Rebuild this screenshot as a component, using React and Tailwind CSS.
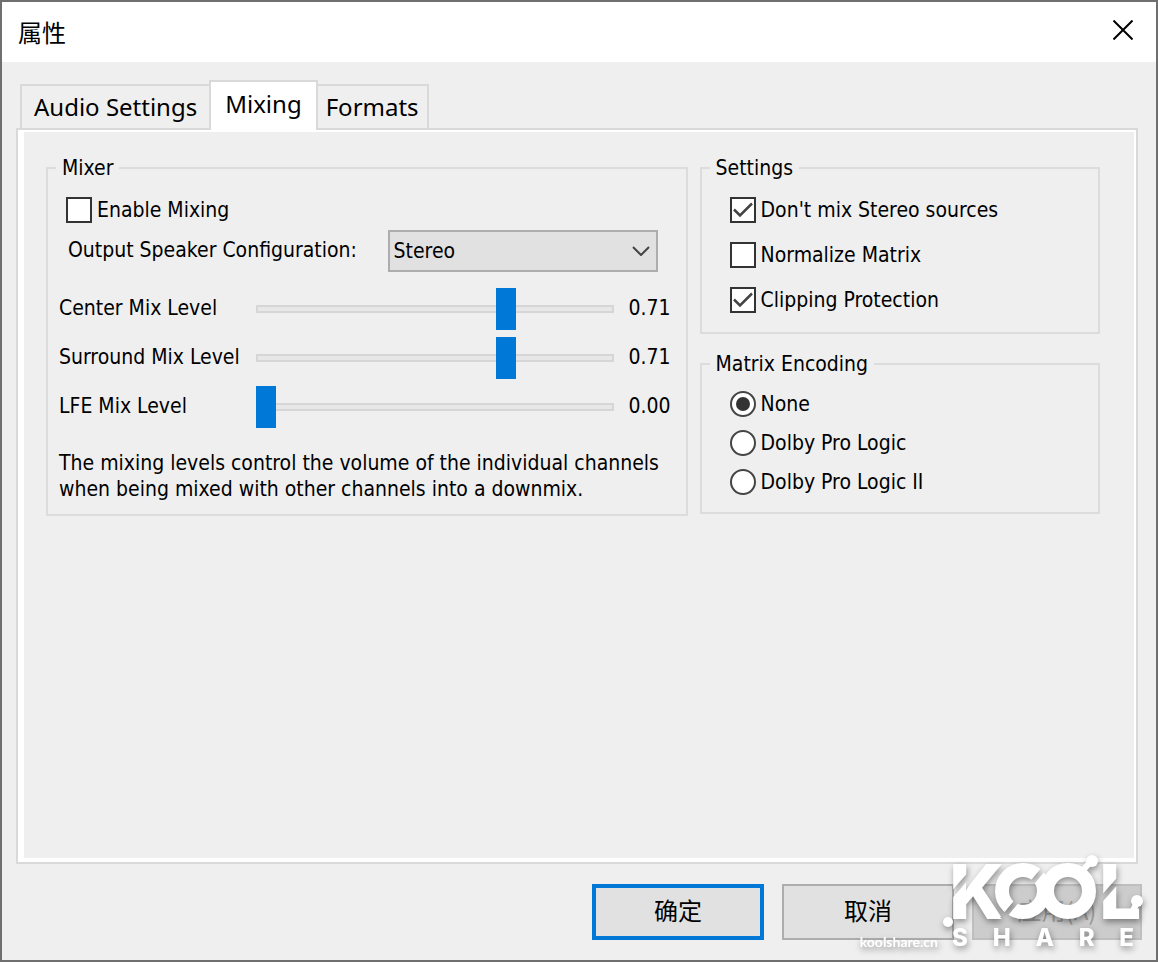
import { useState } from 'react'

const levels = [
  { id: 'center', label: 'Center Mix Level', value: 71 },
  { id: 'surround', label: 'Surround Mix Level', value: 71 },
  { id: 'lfe', label: 'LFE Mix Level', value: 0 },
]

const GroupBox = ({ title, className, children }) => (
  <fieldset className={`min-w-0 border-2 border-[#dcdcdc] ${className}`}>
    <legend className="ml-2 px-1.5 leading-6">{title}</legend>
    {children}
  </fieldset>
)

const CheckBox = ({ label, defaultChecked }) => (
  <label className="flex items-center gap-[5px] leading-7">
    <span className="relative flex size-[26px] shrink-0">
      <input
        type="checkbox"
        defaultChecked={defaultChecked}
        className="peer size-[26px] appearance-none border-2 border-[#333] bg-white"
      />
      <svg
        viewBox="0 0 26 26"
        className="pointer-events-none absolute inset-0 hidden fill-none stroke-[#444] stroke-[2.5] peer-checked:block"
      >
        <path d="M4 12.500l6 6L22 6.500" />
      </svg>
    </span>
    {label}
  </label>
)

const RadioButton = ({ label, defaultChecked }) => (
  <label className="flex items-center gap-[5px] leading-7">
    <span className="relative flex size-[26px] shrink-0">
      <input
        type="radio"
        name="encoding"
        defaultChecked={defaultChecked}
        className="peer size-[26px] appearance-none rounded-full border-2 border-[#444] bg-white"
      />
      <span className="pointer-events-none absolute inset-1.5 hidden rounded-full bg-[#333] peer-checked:block" />
    </span>
    {label}
  </label>
)

const LevelSlider = ({ id, label, initial }) => {
  const [level, setLevel] = useState(initial)

  return (
    <div className="flex h-[42px] items-center">
      <label htmlFor={id} className="w-[197px] shrink-0">{label}</label>
      <input
        id={id}
        type="range"
        min="0"
        max="100"
        value={level}
        onChange={(e) => setLevel(Number(e.target.value))}
        className="h-[42px] min-w-0 flex-1 appearance-none bg-transparent [&::-webkit-slider-runnable-track]:h-2 [&::-webkit-slider-runnable-track]:bg-[#e7e7e7] [&::-webkit-slider-runnable-track]:shadow-[inset_0_0_0_2px_#d6d6d6] [&::-webkit-slider-thumb]:-mt-[17px] [&::-webkit-slider-thumb]:h-[42px] [&::-webkit-slider-thumb]:w-5 [&::-webkit-slider-thumb]:appearance-none [&::-webkit-slider-thumb]:bg-[#0078d7]"
      />
      <output htmlFor={id} className="w-[70px] shrink-0 pl-[15px]">{(level / 100).toFixed(2)}</output>
    </div>
  )
}

const Watermark = () => (
  <div className="pointer-events-none absolute right-3 bottom-3 flex items-end gap-1 text-white drop-shadow-[1px_3px_3px_rgba(0,0,0,0.4)]">
    <span className="-mb-1 font-['Lato',sans-serif] text-sm leading-5 font-bold">koolshare.cn</span>
    <div className="w-[202px]">
      <svg viewBox="0 0 202 76" className="block h-[76px] w-[202px] overflow-visible fill-white font-['Inter',sans-serif]" aria-hidden="true">
        <mask id="cut" maskUnits="userSpaceOnUse" x="0" y="-20" width="202" height="120">
          <rect y="-20" width="202" height="120" fill="white" />
          <path d="M42 6L7 46M60 67L104 14M180 24L156 51" className="fill-none stroke-black stroke-[5]" />
        </mask>
        <g mask="url(#cut)">
          <text x="7" y="67" className="text-[75px] font-extrabold">K</text>
          <circle cx="81" cy="39" r="21" className="fill-none stroke-white stroke-[14]" />
          <text x="157" y="67" className="text-[75px] font-extrabold">L</text>
        </g>
        <circle cx="126" cy="39" r="21" className="fill-none stroke-white stroke-[14]" />
        <path d="M136 24L149 9M190 60l5-9" className="fill-none stroke-white stroke-[6]" />
        <circle cx="6" cy="70" r="5" />
        <circle cx="150" cy="9" r="6" />
        <circle cx="195" cy="49" r="6" />
      </svg>
      <div className="flex justify-between px-2.5 font-['Inter',sans-serif] text-2xl leading-5 font-extrabold">
        <span>S</span>
        <span>H</span>
        <span>A</span>
        <span>R</span>
        <span>E</span>
      </div>
    </div>
  </div>
)

const App = () => {
  return (
    <div className="flex min-h-screen flex-col border-2 border-[#6f6f6f] bg-[#efefef] font-['DejaVu_Sans_Condensed','Noto_Sans_CJK_SC',sans-serif] text-[21px] text-black">
      <header className="flex h-[60px] items-center justify-between bg-white pr-[23px] pl-4">
        <h1 className="font-['Noto_Sans_CJK_SC',sans-serif] text-2xl">属性</h1>
        <button type="button" aria-label="关闭" className="pb-1">
          <svg viewBox="0 0 20 20" className="size-5 fill-none stroke-black stroke-2">
            <path d="M.5.5l19 19M19.500.5l-19 19" />
          </svg>
        </button>
      </header>

      <main className="flex flex-1 flex-col px-3.5 pt-[18px]">
        <div role="tablist" className="relative -mb-0.5 ml-1 flex items-end font-['Noto_Sans','Noto_Sans_CJK_SC',sans-serif] text-2xl">
          <button type="button" role="tab" className="h-[46px] border-2 border-r-0 border-[#d9d9d9] px-3">Audio Settings</button>
          <button type="button" role="tab" aria-selected="true" className="h-[50px] border-2 border-b-0 border-[#d9d9d9] bg-white px-3.5 pb-1">Mixing</button>
          <button type="button" role="tab" className="h-[46px] border-2 border-l-0 border-[#d9d9d9] px-2">Formats</button>
        </div>

        <section role="tabpanel" className="mr-1 flex flex-1 flex-col border-2 border-[#d9d9d9] bg-white pt-0.5 pr-0.5 pb-1 pl-1.5">
          <div className="flex flex-1 items-start gap-3 bg-[#efefef] pt-6 pr-[34px] pl-[22px]">
            <GroupBox title="Mixer" className="flex-[640] pb-3">
              <div className="pt-4 pl-[18px]">
                <CheckBox label="Enable Mixing" />
              </div>
              <div className="mt-1.5 flex items-center pr-7 pl-5">
                <label htmlFor="speakers" className="flex-1">Output Speaker Configuration:</label>
                <span className="relative flex w-[270px]">
                  <select id="speakers" className="h-[42px] w-full appearance-none border-2 border-[#adadad] bg-[#e1e1e1] pt-0.5 pl-1">
                    <option>Stereo</option>
                    <option>Mono</option>
                    <option>5.1</option>
                  </select>
                  <svg viewBox="0 0 18 10" className="pointer-events-none absolute top-4 right-2 h-2.5 w-[18px] fill-none stroke-[#444] stroke-2">
                    <path d="M1 1l8 8 8-8" />
                  </svg>
                </span>
              </div>
              <div className="mt-4 flex flex-col gap-[7px] pr-0.5 pl-[11px]">
                {levels.map((l) => (
                  <LevelSlider key={l.id} id={l.id} label={l.label} initial={l.value} />
                ))}
              </div>
              <p className="mt-[22px] pl-[11px] leading-[26px]">
                The mixing levels control the volume of the individual channels when being mixed with other channels into a downmix.
              </p>
            </GroupBox>

            <div className="flex flex-[402] flex-col gap-[18px]">
              <GroupBox title="Settings" className="pb-[18px]">
                <div className="flex flex-col gap-[17px] pt-4 pl-7">
                  <CheckBox label="Don't mix Stereo sources" defaultChecked />
                  <CheckBox label="Normalize Matrix" />
                  <CheckBox label="Clipping Protection" defaultChecked />
                </div>
              </GroupBox>
              <GroupBox title="Matrix Encoding" className="pb-4">
                <div className="flex flex-col gap-[11px] pt-3.5 pl-7">
                  <RadioButton label="None" defaultChecked />
                  <RadioButton label="Dolby Pro Logic" />
                  <RadioButton label="Dolby Pro Logic II" />
                </div>
              </GroupBox>
            </div>
          </div>
        </section>
      </main>

      <footer className="relative flex justify-end gap-[18px] px-3.5 py-5 font-['Noto_Sans_CJK_SC',sans-serif] text-2xl">
        <button type="button" className="h-14 w-[172px] border-4 border-[#0078d7] bg-[#e1e1e1] pb-1">确定</button>
        <button type="button" className="h-14 w-[172px] border-2 border-[#adadad] bg-[#e1e1e1] pb-1">取消</button>
        <button type="button" disabled className="h-14 w-[170px] border-2 border-[#bfbfbf] bg-[#cccccc] pb-1 text-[#9a9a9a]">应用(A)</button>
        <Watermark />
      </footer>
    </div>
  )
}

export default App
